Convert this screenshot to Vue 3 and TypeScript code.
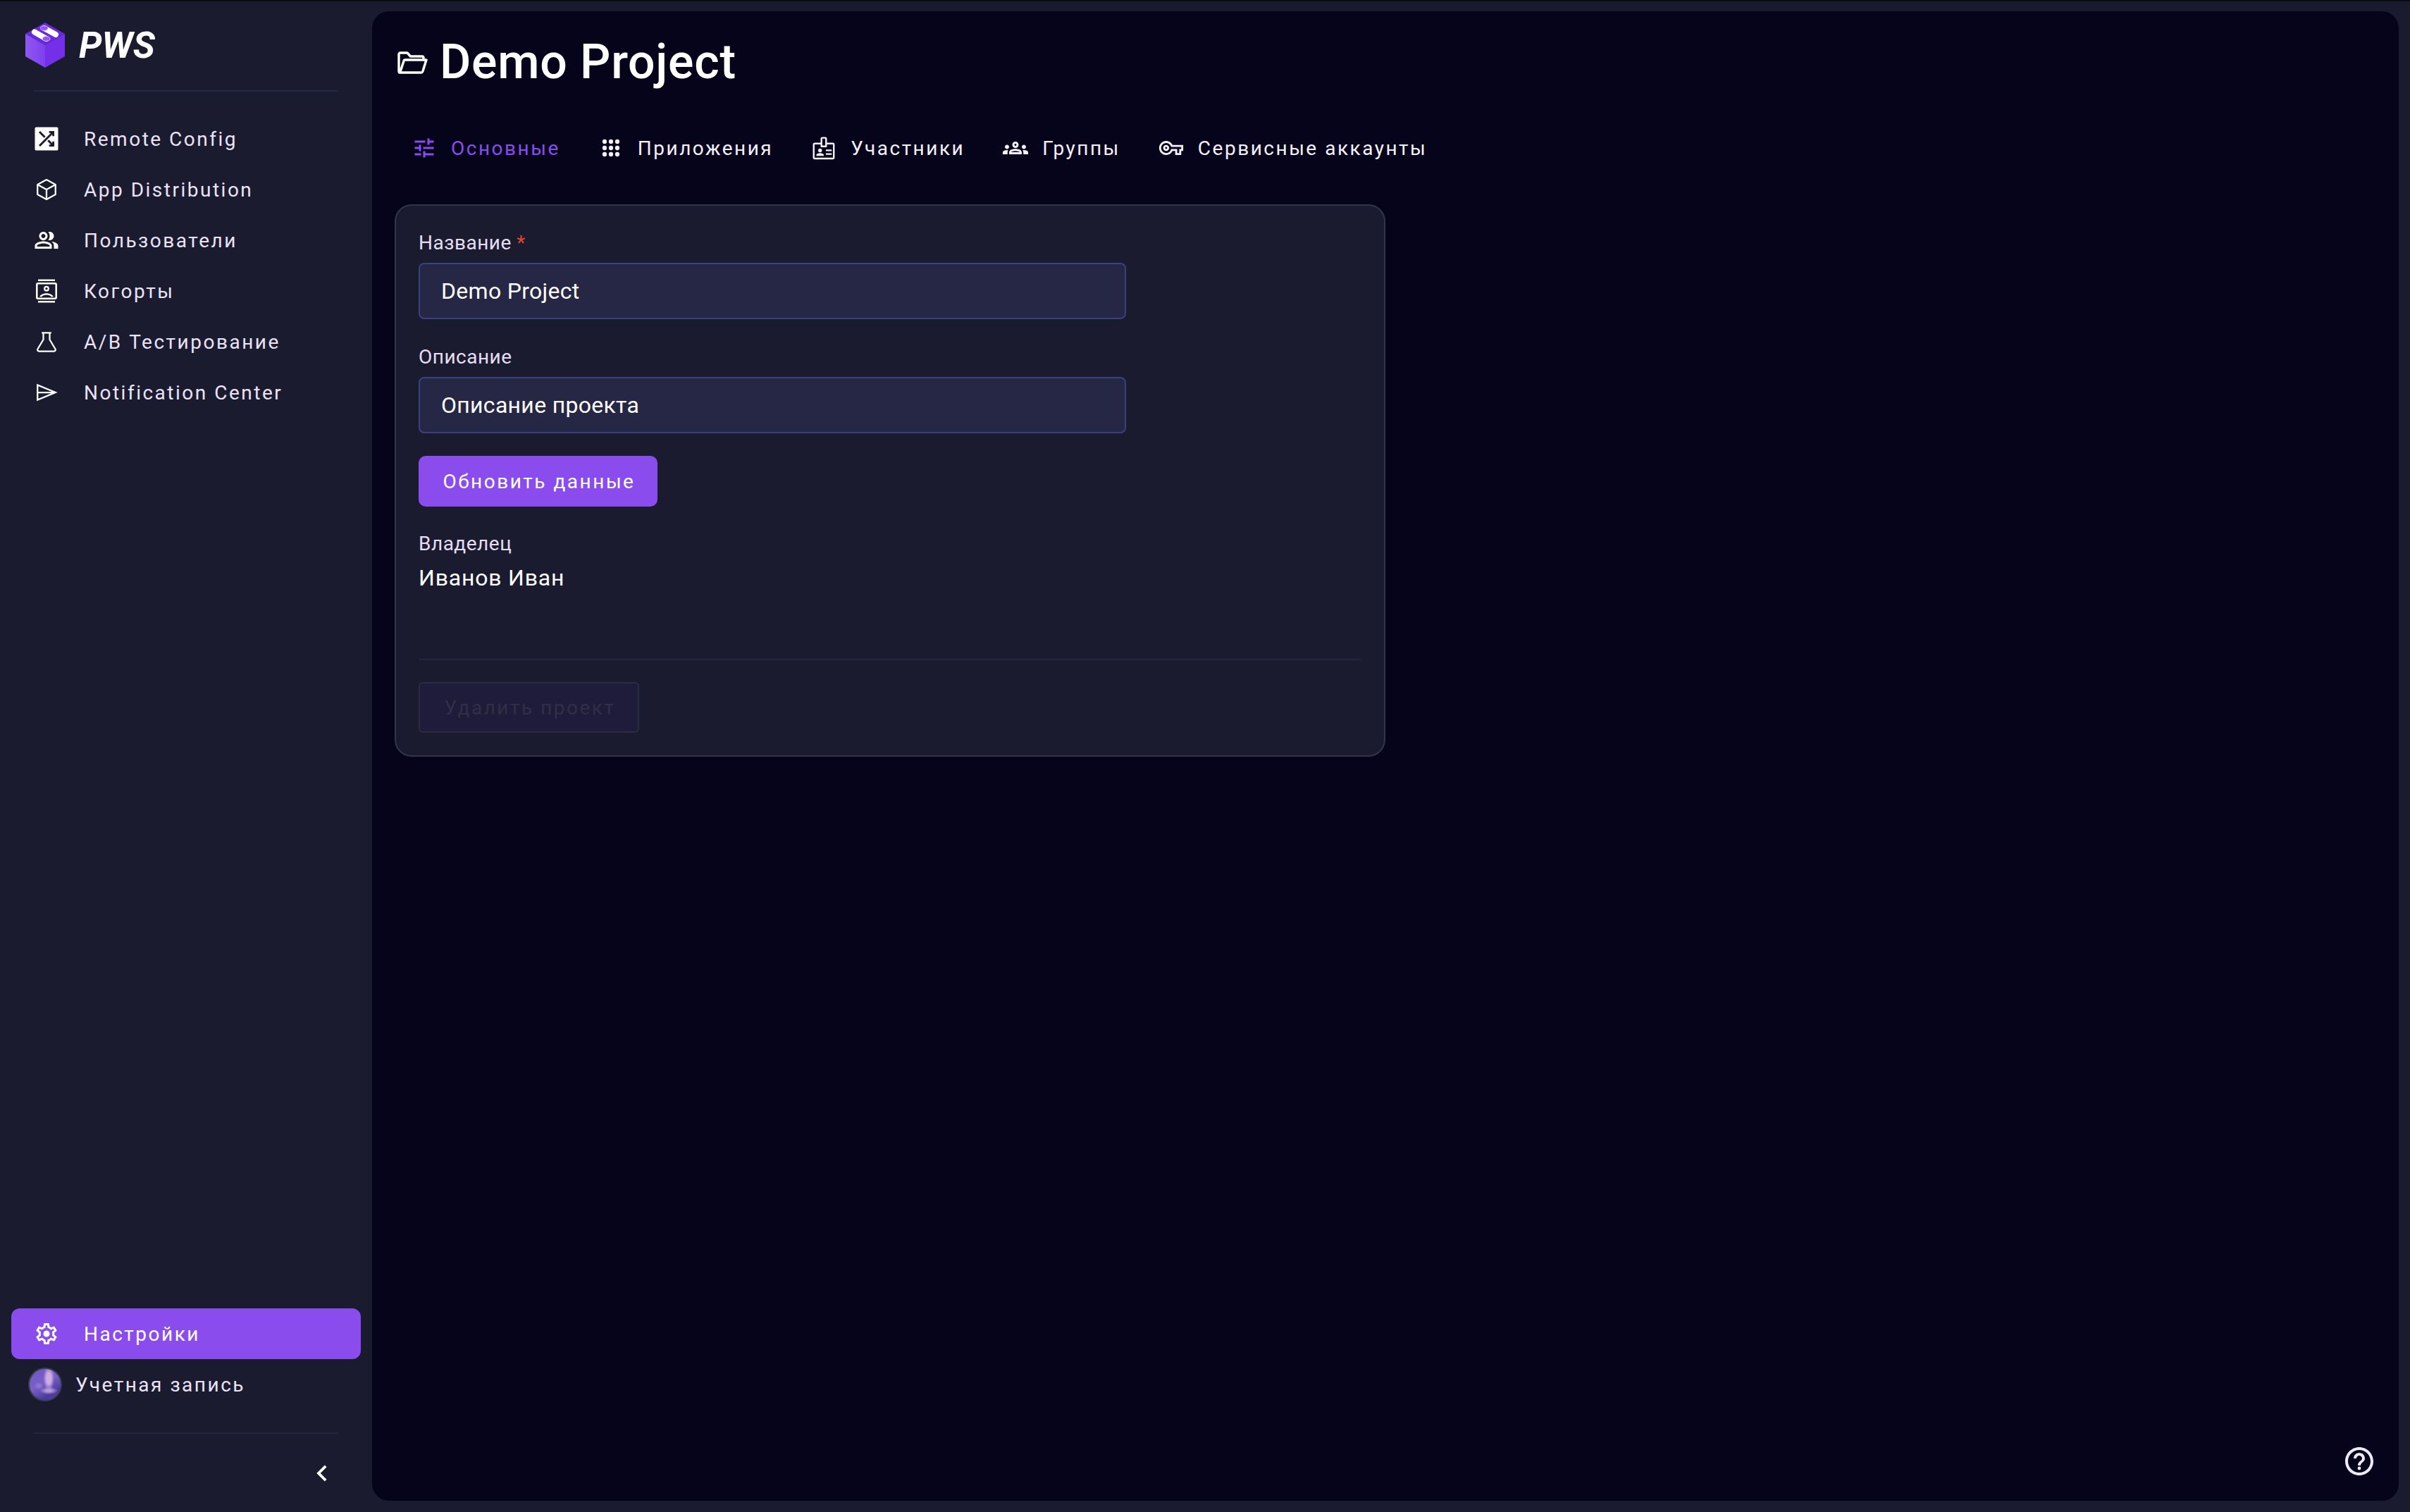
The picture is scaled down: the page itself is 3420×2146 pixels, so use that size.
<script setup lang="ts">
interface NavItem { label: string; icon: string }
const navItems: NavItem[] = [
  { label: 'Remote Config', icon: 'shuffle' },
  { label: 'App Distribution', icon: 'box' },
  { label: 'Пользователи', icon: 'people' },
  { label: 'Когорты', icon: 'contacts' },
  { label: 'A/B Тестирование', icon: 'flask' },
  { label: 'Notification Center', icon: 'send' },
]
interface TabItem { label: string; icon: string; active?: boolean }
const tabs: TabItem[] = [
  { label: 'Основные', icon: 'tune', active: true },
  { label: 'Приложения', icon: 'apps' },
  { label: 'Участники', icon: 'badge' },
  { label: 'Группы', icon: 'groups' },
  { label: 'Сервисные аккаунты', icon: 'key' },
]
</script>

<template>
  <div class="app">
    <aside class="sidebar">
      <div class="brand">
        <svg class="logo" viewBox="0 0 56 64">
          <defs>
            <linearGradient id="cubeLeft" x1="0" y1="0" x2="1" y2="0">
              <stop offset="0" stop-color="#8f58f2" />
              <stop offset="1" stop-color="#7d40ec" />
            </linearGradient>
          </defs>
          <path d="M28 0 56 16 28 32 0 16Z" fill="#6a28dc" />
          <path d="M0 16 28 32V64L0 48Z" fill="url(#cubeLeft)" />
          <path d="M56 16 28 32V64L56 48Z" fill="#7430e8" />
          <path d="M13 13.500 29.700 23M26.700 8 43 17" stroke="#fff" stroke-width="8" stroke-linecap="round" fill="none" />
          <ellipse cx="26.700" cy="8" rx="5.500" ry="3.400" fill="#8f58f2" stroke="#e8dcff" stroke-width=".7" />
          <ellipse cx="29.700" cy="23" rx="5.500" ry="3.400" fill="#8f58f2" stroke="#e8dcff" stroke-width=".7" />
        </svg>
        <span class="brand-name">PWS</span>
      </div>

      <nav class="nav">
        <a v-for="item in navItems" :key="item.label" class="nav-item">
          <span class="nav-icon">
            <svg viewBox="0 0 24 24" class="icon">
              <template v-if="item.icon === 'shuffle'">
                <path transform="translate(-2.667 -2.667) scale(1.222)" fill="currentColor" fill-rule="evenodd" d="M4 3h16a1 1 0 0 1 1 1v16a1 1 0 0 1-1 1H4a1 1 0 0 1-1-1V4a1 1 0 0 1 1-1Zm10 3v1.500h1.400L6 16.900 7.100 18l9.400-9.400V10H18V6ZM7.100 6 6 7.100l4.200 4.200 1.100-1.100ZM13.800 12.700l-1.100 1.100 2.700 2.700H14V18h4v-4h-1.500v1.400Z" />
              </template>
              <template v-else-if="item.icon === 'box'">
                <path fill="none" stroke="currentColor" stroke-width="1.500" stroke-linejoin="round" d="M12 2.700l8.500 4.700v9.200L12 21.300l-8.500-4.700V7.400ZM3.500 7.400 12 12l8.500-4.600M12 12v9.300" />
              </template>
              <template v-else-if="item.icon === 'people'">
                <path fill="currentColor" fill-rule="evenodd" d="M16.670 13.130C18.040 14.060 19 15.320 19 17v3h4v-3c0-2.180-3.570-3.470-6.330-3.870ZM15 12c2.210 0 4-1.790 4-4s-1.790-4-4-4c-.47 0-.91.1-1.330.24C14.500 5.270 15 6.580 15 8s-.5 2.730-1.330 3.760c.42.14.86.24 1.330.24ZM9 12c2.210 0 4-1.790 4-4s-1.790-4-4-4-4 1.790-4 4 1.790 4 4 4Zm0-6c1.100 0 2 .9 2 2s-.9 2-2 2-2-.9-2-2 .9-2 2-2ZM9 13c-2.670 0-8 1.340-8 4v3h16v-3c0-2.660-5.330-4-8-4Zm6 5H3v-.99C3.200 16.290 6.300 15 9 15s5.800 1.290 6 2v1Z" />
              </template>
              <template v-else-if="item.icon === 'contacts'">
                <path fill="currentColor" fill-rule="evenodd" d="M4 1h16v1.600H4ZM4 21.400h16V23H4ZM4 4h16a2 2 0 0 1 2 2v12a2 2 0 0 1-2 2H4a2 2 0 0 1-2-2V6a2 2 0 0 1 2-2Zm0 1.700a.3.3 0 0 0-.3.3v12a.3.3 0 0 0 .3.3h16a.3.3 0 0 0 .3-.3V6a.3.3 0 0 0-.3-.3ZM12 7.200a2.600 2.600 0 1 1 0 5.200 2.600 2.600 0 0 1 0-5.200Zm0 1.500a1.100 1.100 0 1 0 0 2.200 1.100 1.100 0 0 0 0-2.200ZM5.500 17.500c.2-2 4-3.400 6.500-3.400s6.300 1.400 6.500 3.400h-1.900c-.6-.9-2.700-1.800-4.600-1.800s-4 .9-4.600 1.800Z" />
              </template>
              <template v-else-if="item.icon === 'flask'">
                <path fill="none" stroke="currentColor" stroke-width="1.500" stroke-linejoin="round" d="M7.500 3.500h9M9 3.500V10L3.600 19c-.5 1 .2 2 1.400 2h14c1.200 0 1.900-1 1.400-2L15 10V3.500" />
              </template>
              <template v-else-if="item.icon === 'send'">
                <path fill="none" stroke="currentColor" stroke-width="1.500" d="M3.500 5v14L20.500 12ZM3.500 12h17" />
              </template>
            </svg>
          </span>
          <span class="nav-label">{{ item.label }}</span>
        </a>
      </nav>

      <div class="sidebar-bottom">
        <a class="nav-item active">
          <span class="nav-icon">
            <svg viewBox="0 0 24 24" class="icon">
              <path fill="currentColor" d="M19.430 12.980c.04-.32.07-.64.07-.98 0-.34-.03-.66-.07-.98l2.110-1.650c.19-.15.24-.42.12-.64l-2-3.460c-.09-.16-.26-.25-.44-.25-.06 0-.12.01-.17.03l-2.490 1c-.52-.4-1.080-.73-1.690-.98l-.38-2.650C14.460 2.180 14.250 2 14 2h-4c-.25 0-.46.18-.49.42l-.38 2.650c-.61.25-1.170.59-1.690.98l-2.490-1c-.06-.02-.12-.03-.18-.03-.17 0-.34.09-.43.25l-2 3.460c-.13.22-.07.49.12.64l2.110 1.650c-.04.32-.07.65-.07.98 0 .33.03.66.07.98l-2.110 1.650c-.19.15-.24.42-.12.64l2 3.460c.09.16.26.25.44.25.06 0 .12-.01.17-.03l2.490-1c.52.4 1.080.73 1.690.98l.38 2.650c.03.24.24.42.49.42h4c.25 0 .46-.18.49-.42l.38-2.650c.61-.25 1.170-.59 1.690-.98l2.490 1c.06.02.12.03.18.03.17 0 .34-.09.43-.25l2-3.460c.12-.22.07-.49-.12-.64l-2.110-1.650zm-1.980-1.710c.04.31.05.52.05.73 0 .21-.02.43-.05.73l-.14 1.130.89.7 1.080.84-.7 1.210-1.270-.51-1.040-.42-.9.68c-.43.32-.84.56-1.250.73l-1.060.43-.16 1.130-.2 1.350h-1.400l-.19-1.350-.16-1.130-1.060-.43c-.43-.18-.83-.41-1.230-.71l-.91-.7-1.060.43-1.270.51-.7-1.210 1.080-.84.89-.7-.14-1.130c-.03-.31-.05-.54-.05-.74s.02-.43.05-.73l.14-1.130-.89-.7-1.080-.84.7-1.210 1.270.51 1.040.42.9-.68c.43-.32.84-.56 1.250-.73l1.060-.43.16-1.130.2-1.350h1.390l.19 1.350.16 1.130 1.060.43c.43.18.83.41 1.230.71l.91.7 1.060-.43 1.270-.51.7 1.210-1.070.85-.89.7.14 1.130z" />
              <circle cx="12" cy="12" r="3" fill="currentColor" />
            </svg>
          </span>
          <span class="nav-label">Настройки</span>
        </a>
        <a class="account">
          <span class="avatar"></span>
          <span class="nav-label">Учетная запись</span>
        </a>
        <div class="divider-bottom"></div>
        <div class="collapse">
          <svg viewBox="0 0 24 24" class="chevron"><path fill="currentColor" d="M15.410 7.410 14 6l-6 6 6 6 1.410-1.410L10.830 12z" /></svg>
        </div>
      </div>
    </aside>

    <main class="main">
      <header class="title-row">
        <svg viewBox="0 0 44 32" class="folder"><path fill="none" stroke="currentColor" stroke-width="3.400" stroke-linejoin="round" d="M2 29V4a2 2 0 0 1 2-2h10l4.500 5H35a2 2 0 0 1 2 2v3M2 29a1.500 1.500 0 0 0 2 1h29a3 3 0 0 0 3-2l5-16H11a2 2 0 0 0-2 1.500L4 29" /></svg>
        <h1 class="title">Demo Project</h1>
      </header>

      <div class="tabs">
        <div v-for="tab in tabs" :key="tab.label" class="tab" :class="{ 'tab-active': tab.active }">
          <svg viewBox="0 0 24 24" class="tab-icon">
            <template v-if="tab.icon === 'tune'">
              <path fill="currentColor" d="M3 17v2h6v-2H3ZM3 5v2h10V5H3Zm10 16v-2h8v-2h-8v-2h-2v6h2ZM7 9v2H3v2h4v2h2V9H7Zm14 4v-2H11v2h10Zm-6-4h2V7h4V5h-4V3h-2v6Z" />
            </template>
            <template v-else-if="tab.icon === 'apps'">
              <g fill="currentColor"><circle cx="6" cy="6" r="2.100" /><circle cx="12" cy="6" r="2.100" /><circle cx="18" cy="6" r="2.100" /><circle cx="6" cy="12" r="2.100" /><circle cx="12" cy="12" r="2.100" /><circle cx="18" cy="12" r="2.100" /><circle cx="6" cy="18" r="2.100" /><circle cx="12" cy="18" r="2.100" /><circle cx="18" cy="18" r="2.100" /></g>
            </template>
            <template v-else-if="tab.icon === 'badge'">
              <path fill="none" stroke="currentColor" stroke-width="1.600" stroke-linejoin="round" d="M9.800 7.800H3.500a1 1 0 0 0-1 1V21a1 1 0 0 0 1 1h17a1 1 0 0 0 1-1V8.800a1 1 0 0 0-1-1h-6.300M9.800 3.200a.8.8 0 0 1 .8-.8h2.800a.8.8 0 0 1 .8.8v7.300H9.800Z" />
              <path fill="currentColor" d="M8.500 12.500a1.800 1.800 0 1 1 0 3.600 1.800 1.800 0 0 1 0-3.600ZM5 19.500v-.9c0-1.100 2.300-1.800 3.500-1.800s3.500.7 3.500 1.800v.9ZM14 13.500h5.500v1.500H14ZM14 17h5.500v1.500H14Z" />
            </template>
            <template v-else-if="tab.icon === 'groups'">
              <path fill="currentColor" fill-rule="evenodd" d="M4 13c1.100 0 2-.9 2-2s-.9-2-2-2-2 .9-2 2 .9 2 2 2Zm1.130 1.100C4.760 14.040 4.390 14 4 14c-.99 0-1.930.21-2.780.58C.48 14.900 0 15.620 0 16.430V18h4.500v-1.610c0-.83.23-1.610.63-2.290ZM20 13c1.100 0 2-.9 2-2s-.9-2-2-2-2 .9-2 2 .9 2 2 2Zm4 3.430c0-.81-.48-1.530-1.220-1.850-.85-.37-1.790-.58-2.780-.58-.39 0-.76.04-1.130.1.4.68.63 1.460.63 2.290V18H24v-1.570Zm-7.760-2.780c-1.170-.52-2.610-.9-4.240-.9s-3.070.39-4.240.9C6.680 14.130 6 15.210 6 16.390V18h12v-1.610c0-1.180-.68-2.260-1.760-2.740ZM8.070 16c.09-.23.13-.39.91-.69.97-.38 1.990-.56 3.020-.56s2.050.18 3.020.56c.77.3.81.46.91.69H8.070ZM12 8c.55 0 1 .45 1 1s-.45 1-1 1-1-.45-1-1 .45-1 1-1m0-2c-1.660 0-3 1.340-3 3s1.340 3 3 3 3-1.340 3-3-1.340-3-3-3Z" />
            </template>
            <template v-else-if="tab.icon === 'key'">
              <path transform="translate(.6 .6) scale(.95)" fill="currentColor" fill-rule="evenodd" d="M22 19h-6v-4h-2.680c-1.140 2.420-3.600 4-6.320 4-3.860 0-7-3.140-7-7s3.140-7 7-7c2.720 0 5.170 1.580 6.320 4H24v6h-2v4Zm-4-2h2v-4h2v-2H11.940l-.23-.67C11.010 8.340 9.110 7 7 7c-2.760 0-5 2.240-5 5s2.240 5 5 5c2.110 0 4.010-1.340 4.710-3.330l.23-.67H18v4ZM7 15c-1.650 0-3-1.350-3-3s1.350-3 3-3 3 1.350 3 3-1.350 3-3 3Zm0-4c-.55 0-1 .45-1 1s.45 1 1 1 1-.45 1-1-.45-1-1-1Z" />
            </template>
          </svg>
          <span>{{ tab.label }}</span>
        </div>
      </div>

      <section class="card">
        <label class="field-label">Название <span class="req">*</span></label>
        <div class="input">Demo Project</div>
        <label class="field-label second">Описание</label>
        <div class="input">Описание проекта</div>
        <button class="btn-primary" type="button">Обновить данные</button>
        <div class="field-label owner-label">Владелец</div>
        <div class="owner">Иванов Иван</div>
        <div class="card-divider"></div>
        <button class="btn-disabled" type="button" disabled>Удалить проект</button>
      </section>

      <button class="help" type="button" aria-label="Помощь">
        <svg viewBox="0 0 24 24" class="help-icon">
          <path fill="currentColor" d="M12 2C6.480 2 2 6.480 2 12s4.480 10 10 10 10-4.480 10-10S17.520 2 12 2zm0 18c-4.410 0-8-3.590-8-8s3.590-8 8-8 8 3.590 8 8-3.590 8-8 8zm0-14c-2.210 0-4 1.790-4 4h2c0-1.100.9-2 2-2s2 .9 2 2c0 2-3 1.750-3 5h2c0-2.250 3-2.500 3-5 0-2.210-1.790-4-4-4z" />
          <circle cx="12" cy="17" r="1.200" fill="currentColor" />
        </svg>
      </button>
    </main>
  </div>
</template>

<style>
html, body { margin: 0; background: #1a1b2f; }
</style>

<style scoped>
.app {
  width: 3420px;
  height: 2146px;
  box-sizing: border-box;
  border-top: 2px solid #0b0b12;
  display: flex;
  background: #1a1b2f;
  font-family: Roboto, "Liberation Sans", sans-serif;
  overflow: hidden;
}
.sidebar {
  width: 528px;
  flex: none;
  display: flex;
  flex-direction: column;
  box-sizing: border-box;
  padding-top: 30px;
}
.brand {
  height: 64px;
  display: flex;
  align-items: center;
  padding-left: 36px;
  gap: 20px;
}
.logo { width: 56px; height: 64px; flex: none; }
.brand-name {
  font-size: 52px;
  font-weight: 700;
  font-style: italic;
  color: #fff;
  line-height: 1;
  padding-top: 2px;
}
.nav {
  margin: 32px 48px 0;
  border-top: 2px solid #24264a;
  padding-top: 31px;
  display: flex;
  flex-direction: column;
}
.nav-item {
  height: 72px;
  display: flex;
  align-items: center;
  color: #ebe3f8;
  font-size: 28px;
  letter-spacing: 2.500px;
  cursor: pointer;
}
.nav-icon {
  width: 36px;
  display: flex;
  justify-content: center;
  margin-right: 35px;
  flex: none;
}
.icon { width: 36px; height: 36px; flex: none; color: #fff; }
.sidebar-bottom {
  margin-top: auto;
  display: flex;
  flex-direction: column;
}
.nav-item.active {
  margin: 0 16px;
  padding-left: 32px;
  border-radius: 12px;
  background: #8b4cee;
  color: #fff;
}
.account {
  height: 72px;
  display: flex;
  align-items: center;
  padding-left: 40px;
  gap: 19px;
  color: #ebe3f8;
  font-size: 28px;
  letter-spacing: 2.500px;
}
.avatar {
  width: 48px;
  height: 48px;
  flex: none;
  box-sizing: border-box;
  border-radius: 50%;
  border: 2px solid #3c3c52;
  background:
    radial-gradient(ellipse 18% 42% at 62% 30%, #ceaee2 0 40%, transparent 100%),
    radial-gradient(ellipse 30% 12% at 62% 70%, #b498dc 0 30%, transparent 100%),
    radial-gradient(ellipse 16% 12% at 30% 55%, #8d74d4 0 30%, transparent 100%),
    linear-gradient(150deg, #6a58c0 0%, #7a60c8 45%, #4a3a9c 78%, #5a48b0 100%);
}
.divider-bottom {
  height: 2px;
  margin: 32px 48px 0;
  background: #232440;
}
.collapse {
  height: 111px;
  display: flex;
  align-items: center;
  justify-content: flex-end;
  padding-right: 48px;
}
.chevron { width: 46px; height: 46px; color: #fff; }
.main {
  flex: 1;
  position: relative;
  margin: 14px 16px 16px 0;
  background: #06041a;
  border-radius: 24px;
  padding: 0 0 0 32px;
  color: #fff;
}
.title-row {
  height: 144px;
  display: flex;
  align-items: center;
  gap: 16px;
  padding-left: 4px;
}
.folder { width: 44px; height: 32px; color: #fff; flex: none; margin-top: 2px; }
.title {
  margin: 0;
  font-size: 68px;
  font-weight: 500;
  letter-spacing: .7px;
  line-height: 1;
  color: #fff;
}
.tabs {
  display: flex;
  align-items: center;
  height: 60px;
  margin-top: 20px;
  padding-left: 24px;
  gap: 54px;
}
.tab {
  display: flex;
  align-items: center;
  gap: 20px;
  font-size: 28px;
  letter-spacing: 2.500px;
  color: #f5f0fc;
}
.tab-active { color: #8b4cee; }
.tab-icon { width: 36px; height: 36px; flex: none; }
.card {
  margin-top: 50px;
  width: 1406px;
  box-sizing: border-box;
  padding: 32px;
  border: 2px solid #33344a;
  border-radius: 24px;
  background: #1a1b2f;
  display: flex;
  flex-direction: column;
  align-items: flex-start;
}
.field-label {
  font-size: 28px;
  line-height: 42px;
  color: #e6def5;
  letter-spacing: .5px;
}
.req { color: #e0442f; }
.second { margin-top: 33px; }
.input {
  margin-top: 7px;
  width: 1004px;
  height: 80px;
  box-sizing: border-box;
  padding-left: 30px;
  display: flex;
  align-items: center;
  background: #262645;
  border: 2px solid #3a4180;
  border-radius: 8px;
  font-size: 32px;
  letter-spacing: .3px;
  color: #fff;
}
.btn-primary {
  margin-top: 32px;
  width: 339px;
  height: 72px;
  background: #8b4cee;
  color: #fff;
  border: 0;
  border-radius: 10px;
  font: 400 28px Roboto, sans-serif;
  letter-spacing: 2.500px;
  padding: 0 0 0 3px;
}
.owner-label { margin-top: 32px; }
.owner {
  margin-top: 7px;
  font-size: 32px;
  line-height: 40px;
  color: #fff;
  letter-spacing: .8px;
}
.card-divider {
  align-self: stretch;
  height: 2px;
  margin-top: 95px;
  background: #232440;
}
.btn-disabled {
  margin-top: 31px;
  width: 313px;
  height: 72px;
  background: #1f1b3a;
  color: #2f3045;
  border: 2px solid #2b2c42;
  border-radius: 6px;
  font: 400 28px Roboto, sans-serif;
  letter-spacing: 2.500px;
  padding: 0 0 0 3px;
}
.help {
  position: absolute;
  right: 32px;
  bottom: 32px;
  width: 48px;
  height: 48px;
  padding: 0;
  border: 0;
  background: none;
  color: #f1e9fb;
}
.help-icon { width: 48px; height: 48px; display: block; }
</style>
